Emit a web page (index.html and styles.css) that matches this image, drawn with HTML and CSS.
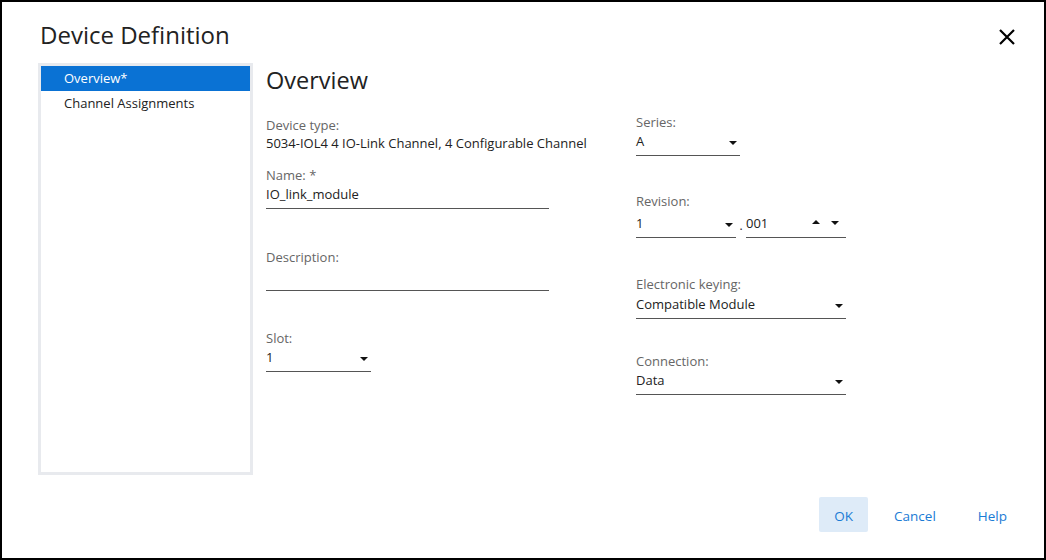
FILE: index.html
```html
<!DOCTYPE html>
<html>
<head>
<meta charset="utf-8">
<link rel="stylesheet" href="styles.css">
</head>
<body>
<div class="dialog">
  <div class="header">
    <h1 class="title">Device Definition</h1>
    <button class="close" aria-label="Close">
      <svg width="18" height="18" viewBox="0 0 18 18"><path d="M2 2 L16 16 M16 2 L2 16" stroke="#000" stroke-width="2.2" fill="none"/></svg>
    </button>
  </div>
  <div class="main">
    <nav class="sidebar">
      <div class="nav-item active">Overview*</div>
      <div class="nav-item">Channel Assignments</div>
    </nav>
    <section class="content">
      <h2 class="heading">Overview</h2>
      <div class="columns">
        <div class="col col-left">
          <div class="field f-type">
            <div class="label">Device type:</div>
            <div class="static">5034-IOL4 4 IO-Link Channel, 4 Configurable Channel</div>
          </div>
          <div class="field f-name">
            <div class="label">Name: *</div>
            <div class="control wide">IO_link_module</div>
          </div>
          <div class="field f-desc">
            <div class="label">Description:</div>
            <div class="control wide"></div>
          </div>
          <div class="field f-slot">
            <div class="label">Slot:</div>
            <div class="control select w105">1<span class="tri down"></span></div>
          </div>
        </div>
        <div class="col col-right">
          <div class="field f-series">
            <div class="label">Series:</div>
            <div class="control select w104">A<span class="tri down"></span></div>
          </div>
          <div class="field f-rev">
            <div class="label">Revision:</div>
            <div class="rev-row">
              <div class="control select w100">1<span class="tri down"></span></div>
              <span class="dot">.</span>
              <div class="control spin w100">001<span class="spins"><span class="tri up"></span><span class="tri down"></span></span></div>
            </div>
          </div>
          <div class="field f-key">
            <div class="label">Electronic keying:</div>
            <div class="control select w210">Compatible Module<span class="tri down"></span></div>
          </div>
          <div class="field f-conn">
            <div class="label">Connection:</div>
            <div class="control select w210">Data<span class="tri down"></span></div>
          </div>
        </div>
      </div>
    </section>
  </div>
  <div class="footer">
    <button class="btn primary">OK</button>
    <button class="btn">Cancel</button>
    <button class="btn">Help</button>
  </div>
</div>
</body>
</html>
```

FILE: styles.css
```css
* { box-sizing: border-box; }
html, body { margin: 0; padding: 0; background: #fff; }
body { font-family: "Open Sans", "Noto Sans", sans-serif; color: #222; }

.dialog {
  width: 1046px;
  height: 560px;
  border: 2px solid #000;
  display: flex;
  flex-direction: column;
  background: #fff;
}

.header {
  display: flex;
  align-items: center;
  justify-content: space-between;
  padding: 4px 27px 0 38px;
  height: 61px;
}
.title {
  margin: 0;
  font-weight: 400;
  font-size: 24px;
  line-height: 30px;
  color: #222;
}
.close {
  border: 0;
  background: none;
  padding: 0;
  width: 20px;
  height: 20px;
  margin-top: 5px;
  display: flex;
  align-items: center;
  justify-content: center;
}

.main {
  display: flex;
  height: 412px;
  padding-left: 36px;
}
.sidebar {
  width: 215px;
  border: 3px solid #e8eaee;
  padding: 0;
  display: flex;
  flex-direction: column;
}
.nav-item {
  height: 25px;
  line-height: 25px;
  padding-left: 23px;
  font-size: 13px;
  color: #222;
}
.nav-item.active {
  background: #0a72d4;
  color: #fff;
}

.content {
  padding-left: 13px;
  flex: 1;
}
.heading {
  margin: 0;
  font-weight: 400;
  font-size: 23.5px;
  line-height: 30px;
  height: 30px;
  margin-top: 2px;
  color: #222;
}
.columns {
  display: flex;
}
.col-left { width: 370px; }
.col-right { flex: 1; }

.label {
  font-size: 13px;
  line-height: 18px;
  color: #666;
}
.static {
  font-size: 13px;
  line-height: 18px;
  color: #222;
}
.control {
  position: relative;
  font-size: 13px;
  line-height: 20px;
  height: 25px;
  padding-bottom: 4px;
  border-bottom: 1px solid #555;
  color: #222;
}
.select, .spin { border-bottom: 1.5px solid #555; }
.wide { width: 283px; }
.w105 { width: 105px; }
.w104 { width: 104px; }
.w100 { width: 100px; }
.w210 { width: 210px; }

.tri {
  position: absolute;
  width: 0;
  height: 0;
  border-left: 4px solid transparent;
  border-right: 4px solid transparent;
}
.tri.down { border-top: 4px solid #111; }
.tri.up { border-bottom: 4px solid #111; }
.select > .tri { right: 3px; top: 10px; }

.spins { position: absolute; right: 7px; top: 6px; display: flex; gap: 11px; }
.spins .tri { position: static; }
.spins .tri.up { margin-top: 1px; }
.spins .tri.down { margin-top: 2px; }

.rev-row { display: flex; align-items: flex-start; }
.dot { font-size: 12px; line-height: 20px; width: 10px; text-align: center; padding-top: 3px; }

.f-type { margin-top: 21px; }
.f-name { margin-top: 14px; }
.f-desc { margin-top: 39px; }
.f-slot { margin-top: 38px; }

.f-series { margin-top: 18px; }
.f-rev { margin-top: 36px; }
.f-rev .rev-row { margin-top: 3px; }
.f-key { margin-top: 37px; }
.f-key .control { margin-top: 1px; }
.f-conn { margin-top: 33px; }

.footer {
  flex: 1;
  display: flex;
  justify-content: flex-end;
  align-items: flex-start;
  padding: 22px 21px 0 0;
  gap: 10px;
}
.btn {
  height: 35px;
  padding: 2px 16px 0;
  border: 0;
  border-radius: 2px;
  background: transparent;
  color: #1a7bd5;
  font-family: "Open Sans", "Noto Sans", sans-serif;
  font-size: 13.5px;
}
.btn.primary { background: #deebf8; width: 49px; padding: 2px 0 0; }
```
